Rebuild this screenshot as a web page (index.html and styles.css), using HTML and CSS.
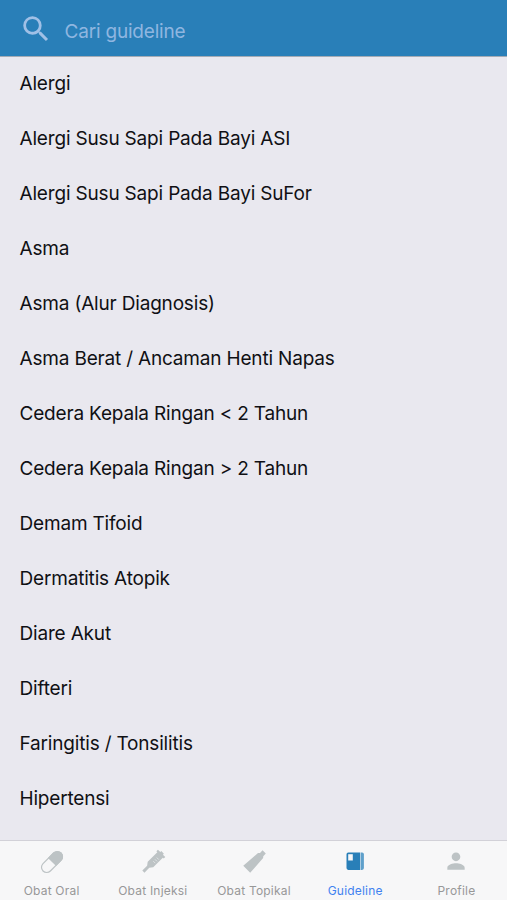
FILE: index.html
```html
<!DOCTYPE html>
<html lang="id">
<head>
  <meta charset="UTF-8">
  <meta name="viewport" content="width=device-width, initial-scale=1.0">
  <title>Guideline</title>
  <link rel="stylesheet" href="styles.css">
</head>
<body>
  <div class="wrapper">
    <div class="search-bar">
      <svg class="search-icon" viewBox="0 0 24 24">
        <path d="M15.5 14h-.79l-.28-.27A6.47 6.47 0 0 0 16 9.5 6.5 6.5 0 1 0 9.5 16c1.61 0 3.09-.59 4.23-1.57l.27.28v.79l5 4.99L20.49 19l-4.99-5zm-6 0C7.01 14 5 11.99 5 9.5S7.01 5 9.5 5 14 7.01 14 9.5 11.99 14 9.5 14z"/>
      </svg>
      <input type="text" name="search" class="search-input" value="" placeholder="Cari guideline">
    </div>

    <ul class="list">
      <li>Alergi</li>
      <li>Alergi Susu Sapi Pada Bayi ASI</li>
      <li>Alergi Susu Sapi Pada Bayi SuFor</li>
      <li>Asma</li>
      <li>Asma (Alur Diagnosis)</li>
      <li>Asma Berat / Ancaman Henti Napas</li>
      <li>Cedera Kepala Ringan &lt; 2 Tahun</li>
      <li>Cedera Kepala Ringan &gt; 2 Tahun</li>
      <li>Demam Tifoid</li>
      <li>Dermatitis Atopik</li>
      <li>Diare Akut</li>
      <li>Difteri</li>
      <li>Faringitis / Tonsilitis</li>
      <li>Hipertensi</li>
    </ul>

    <div class="tabs">
      <div class="tab">
        <svg viewBox="0 0 26 26">
          <g transform="rotate(45 13 13)">
            <rect class="line" x="7.8" y=".3" width="10.4" height="25.4" rx="5.2"/>
            <path d="M7.2 13V5.5a5.8 5.8 0 0 1 11.6 0V13z"/>
          </g>
        </svg>
        <span>Obat Oral</span>
      </div>
      <div class="tab">
        <svg viewBox="0 0 26 26">
          <g transform="rotate(45 13 13)">
            <path d="M11.2 -.6h3.6V.8h3.4V3h-1.3v13.6l-2.4 3.2v6.8h-3v-6.8l-2.4-3.2V3H7.8V.8h3.4z"/>
            <path class="mark" d="M12.6 7.2h2.8M12.6 9.7h2.8M12.6 12.2h2.8"/>
          </g>
        </svg>
        <span>Obat Injeksi</span>
      </div>
      <div class="tab">
        <svg viewBox="0 0 26 26">
          <g transform="rotate(45 13 13)">
            <path d="M10.8 -1.3h4.6v3.6l1.3 1.5 1.2 19.5H8.1L9.5 3.8l1.3-1.5z"/>
          </g>
        </svg>
        <span>Obat Topikal</span>
      </div>
      <div class="tab active">
        <svg viewBox="0 0 26 26">
          <path d="M6.3 3.5h11.8v17.4H6.3a1.8 1.8 0 0 1-1.8-1.8V5.3a1.8 1.8 0 0 1 1.8-1.8z"/>
          <path class="edge" d="M18.6 3.5h1.5a1.8 1.8 0 0 1 1.8 1.8v13.8a1.8 1.8 0 0 1-1.8 1.8h-1.5z"/>
          <path class="label" d="M6.2 5.2h4.6v6.3H6.2z"/>
        </svg>
        <span>Guideline</span>
      </div>
      <div class="tab">
        <svg viewBox="0 .8 24 24">
          <path d="M12 12c2.21 0 4-1.79 4-4s-1.79-4-4-4-4 1.79-4 4 1.79 4 4 4zm0 2c-2.67 0-8 1.34-8 4v2h16v-2c0-2.66-5.33-4-8-4z"/>
        </svg>
        <span>Profile</span>
      </div>
    </div>
  </div>
</body>
</html>
```

FILE: styles.css
```css
* {
  margin: 0;
  padding: 0;
  border: 0;
  box-sizing: border-box;
}

body {
  font-family: Inter, "Liberation Sans", sans-serif;
  background-color: #e9e8ef;
}

.wrapper {
  width: 100%;
  height: 100vh;
  display: flex;
  flex-flow: column nowrap;
  overflow: hidden;
}

.search-bar {
  height: 57px;
  flex: none;
  display: flex;
  align-items: center;
  padding: 5px 18.5px 0;
  background-color: #297fb8;
  border-bottom: 1px solid #a3abb5;
}
.search-icon {
  width: 34px;
  height: 34px;
  margin-bottom: 3px;
  fill: #a0c0e6;
}
.search-input {
  flex: 1;
  height: 40px;
  margin-left: 12px;
  padding-top: 1px;
  background: transparent;
  outline: none;
  font-family: inherit;
  font-size: 19px;
  letter-spacing: -.2px;
  color: #fff;
}
.search-input::placeholder {
  color: #8fb6e0;
  opacity: 1;
}

.list {
  flex: 1;
  min-height: 0;
  overflow: hidden;
  list-style: none;
}
.list li {
  height: 55px;
  line-height: 54px;
  padding-left: 19.5px;
  font-size: 19px;
  letter-spacing: -.18px;
  color: #101014;
  white-space: nowrap;
}

.tabs {
  height: 60px;
  flex: none;
  display: flex;
  padding-left: 1px;
  background-color: #f7f7f8;
  border-top: 1px solid #d2d1d8;
}
.tab {
  flex: 1;
  display: flex;
  flex-flow: column nowrap;
  align-items: center;
  padding-top: 8px;
  color: #989898;
  font-size: 12px;
  line-height: 16px;
  letter-spacing: .2px;
}
.tab svg {
  width: 26px;
  height: 26px;
  margin-bottom: 8px;
  fill: #bdc3c5;
  overflow: visible;
}
.tab .line {
  fill: none;
  stroke: #bdc3c5;
  stroke-width: 1.2;
}
.tab .mark {
  stroke: #e4e7e8;
  stroke-width: .8;
}
.active {
  color: #3f82f0;
}
.active svg {
  fill: #297fb8;
}
.active .edge {
  fill: #5fa0cb;
}
.active .label {
  fill: #f7f7f8;
}
```
